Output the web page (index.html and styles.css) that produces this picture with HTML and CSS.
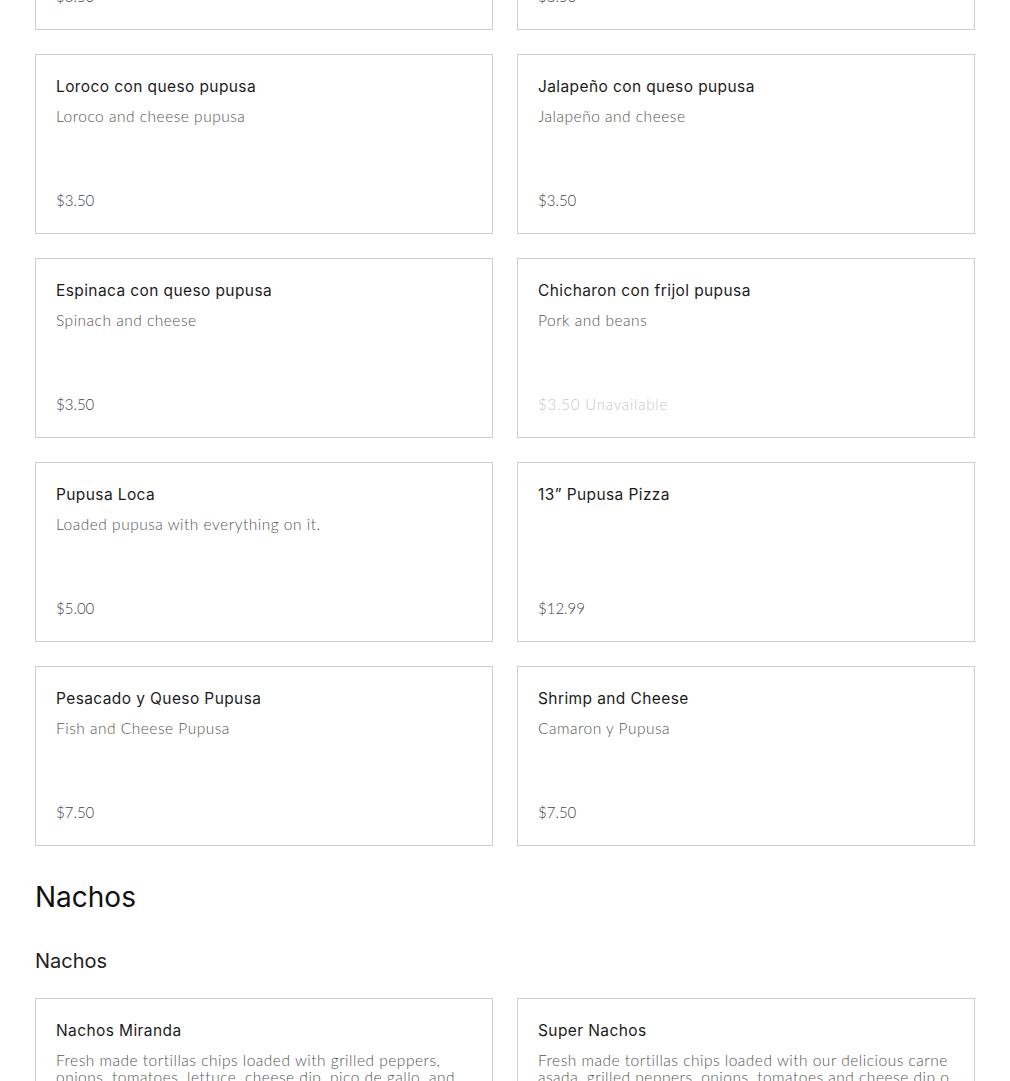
FILE: index.html
```html
<!DOCTYPE html>
<html>
<head>
<meta charset="utf-8">
<link rel="stylesheet" href="styles.css">
</head>
<body>
<div class="menu">
  <div class="grid first">
    <div class="card"><div class="title">Queso pupusa</div><div class="desc">Cheese pupusa</div><div class="price">$3.50</div></div>
    <div class="card"><div class="title">Frijol con queso pupusa</div><div class="desc">Beans and cheese</div><div class="price">$3.50</div></div>
    <div class="card"><div class="title">Loroco con queso pupusa</div><div class="desc">Loroco and cheese pupusa</div><div class="price">$3.50</div></div>
    <div class="card"><div class="title">Jalapeño con queso pupusa</div><div class="desc">Jalapeño and cheese</div><div class="price">$3.50</div></div>
    <div class="card"><div class="title">Espinaca con queso pupusa</div><div class="desc">Spinach and cheese</div><div class="price">$3.50</div></div>
    <div class="card"><div class="title">Chicharon con frijol pupusa</div><div class="desc">Pork and beans</div><div class="price unavailable">$3.50 Unavailable</div></div>
    <div class="card"><div class="title">Pupusa Loca</div><div class="desc">Loaded pupusa with everything on it.</div><div class="price">$5.00</div></div>
    <div class="card"><div class="title">13” Pupusa Pizza</div><div class="desc"></div><div class="price">$12.99</div></div>
    <div class="card"><div class="title">Pesacado y Queso Pupusa</div><div class="desc">Fish and Cheese Pupusa</div><div class="price">$7.50</div></div>
    <div class="card"><div class="title">Shrimp and Cheese</div><div class="desc">Camaron y Pupusa</div><div class="price">$7.50</div></div>
  </div>
  <h2 class="section-title">Nachos</h2>
  <h3 class="sub-title">Nachos</h3>
  <div class="grid">
    <div class="card tall"><div class="title">Nachos Miranda</div><div class="desc">Fresh made tortillas chips loaded with grilled peppers, onions, tomatoes, lettuce, cheese dip, pico de gallo, and sour cream.</div><div class="price">$9.99</div></div>
    <div class="card tall"><div class="title">Super Nachos</div><div class="desc">Fresh made tortillas chips loaded with our delicious carne asada, grilled peppers, onions, tomatoes and cheese dip o sour cream.</div><div class="price">$12.99</div></div>
  </div>
</div>
</body>
</html>
```
FILE: styles.css
```css
html, body {
  margin: 0;
  padding: 0;
  background: #fff;
}
body {
  font-family: "Lato", "Open Sans", sans-serif;
  overflow: hidden;
}
.menu {
  padding: 0 35px;
}
.grid {
  display: grid;
  grid-template-columns: 458px 458px;
  column-gap: 24px;
  row-gap: 24px;
}
.grid.first {
  margin-top: -150px;
}
.card {
  box-sizing: border-box;
  height: 180px;
  border: 1px solid #cfcfcf;
  padding: 22px 20px 23px 20px;
  display: flex;
  flex-direction: column;
}
.card.tall {
  height: 230px;
}
.title {
  font-family: "Inter", "Liberation Sans", sans-serif;
  font-size: 15.5px;
  line-height: 20px;
  color: #1c1c1c;
  letter-spacing: 0.4px;
}
.desc {
  margin-top: 11px;
  font-family: "Lato", sans-serif;
  font-weight: 300;
  font-size: 15.5px;
  line-height: 17px;
  letter-spacing: 0.5px;
  color: #555;
  min-height: 17px;
}
.price {
  margin-top: auto;
  font-family: "Lato", sans-serif;
  font-weight: 300;
  font-size: 15px;
  line-height: 20px;
  color: #444;
}
.price.unavailable {
  color: #c8c8c8;
  letter-spacing: 0.8px;
}
.section-title {
  margin: 34px 0 0 0;
  font-family: "Inter", "Liberation Sans", sans-serif;
  font-weight: 400;
  font-size: 28px;
  line-height: 34px;
  color: #111;
}
.sub-title {
  margin: 35px 0 25px 0;
  font-family: "Inter", "Liberation Sans", sans-serif;
  font-weight: 400;
  font-size: 20px;
  line-height: 24px;
  color: #222;
}
```
